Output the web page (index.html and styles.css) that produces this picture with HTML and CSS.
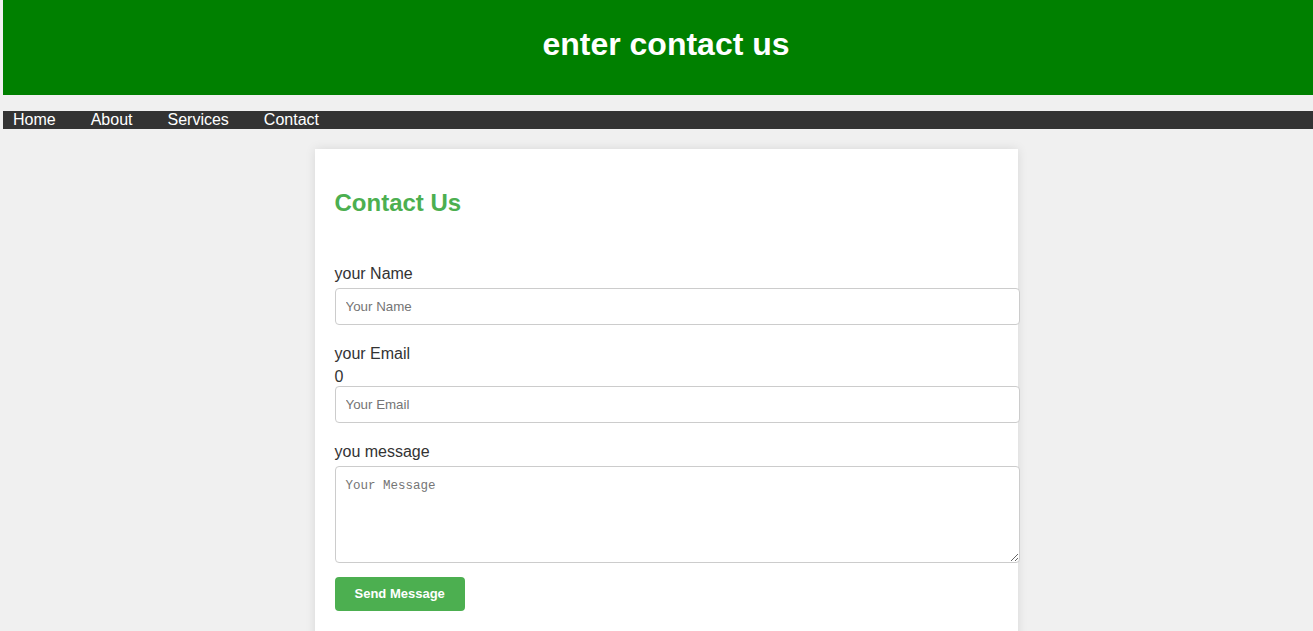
FILE: index.html
```html
<!DOCTYPE html>
<html>
<head>
<meta charset="utf-8">
<title>Contact</title>
<link rel="stylesheet" href="styles.css">
</head>
<body>
<div class="page">
  <header class="site-header">
    <h1 class="site-title">enter contact us</h1>
  </header>
  <nav class="site-nav">
    <a href="#">Home</a>
    <a href="#">About</a>
    <a href="#">Services</a>
    <a href="#">Contact</a>
  </nav>
  <main class="card">
    <h2 class="card-title">Contact Us</h2>
    <form class="form">
      <label class="label" for="name">your Name</label>
      <input class="field" id="name" type="text" placeholder="Your Name">
      <label class="label" for="email">your Email</label>
      0
      <input class="field" id="email" type="email" placeholder="Your Email">
      <label class="label" for="msg">you message</label>
      <textarea class="field area" id="msg" placeholder="Your Message"></textarea>
      <button class="btn" type="button">Send Message</button>
    </form>
  </main>
</div>
</body>
</html>
```
FILE: styles.css
```css
html {
  overflow-x: hidden;
}
body {
  margin: 0;
  background: #f0f0f0;
  font-family: "Liberation Sans", Arial, sans-serif;
  color: #333;
}
.page {
  margin-left: 3px;
  width: 1326px;
}
.site-header {
  background: #008000;
  padding: 26px 0 32px;
  text-align: center;
}
.site-title {
  margin: 0;
  color: #fff;
  font-size: 32px;
  line-height: 37px;
  font-weight: bold;
}
.site-nav {
  margin-top: 16px;
  background: #333;
  display: flex;
  gap: 15px;
  line-height: 18px;
  font-size: 16px;
}
.site-nav a {
  color: #fff;
  text-decoration: none;
  padding: 0 10px;
}
.card {
  width: 663px;
  margin: 20px auto 0;
  background: #fff;
  padding: 20px;
  box-shadow: 0 0 10px rgba(0, 0, 0, 0.1);
  min-height: 500px;
}
.card-title {
  color: #4CAF50;
  font-size: 24px;
  line-height: 28px;
  margin: 20px 0 48px;
}
.form {
  font-size: 16px;
  line-height: 18px;
}
.label {
  display: block;
  margin-bottom: 5px;
}
.field {
  display: block;
  width: 100%;
  padding: 10px;
  border: 1px solid #ccc;
  border-radius: 4px;
  font-family: "Liberation Sans", Arial, sans-serif;
  font-size: 13.33px;
  line-height: 15px;
  margin: 0 0 20px;
  color: #333;
}
.field::placeholder {
  color: #757575;
}
.area {
  height: 75px;
  font-family: "Liberation Mono", monospace;
  font-size: 12.5px;
  line-height: 19px;
  margin-bottom: 14px;
}
.btn {
  background: #4CAF50;
  color: #fff;
  border: none;
  border-radius: 4px;
  padding: 10px 20px;
  font-family: "Liberation Sans", Arial, sans-serif;
  font-size: 13px;
  line-height: 14px;
  font-weight: bold;
  cursor: pointer;
}
```
